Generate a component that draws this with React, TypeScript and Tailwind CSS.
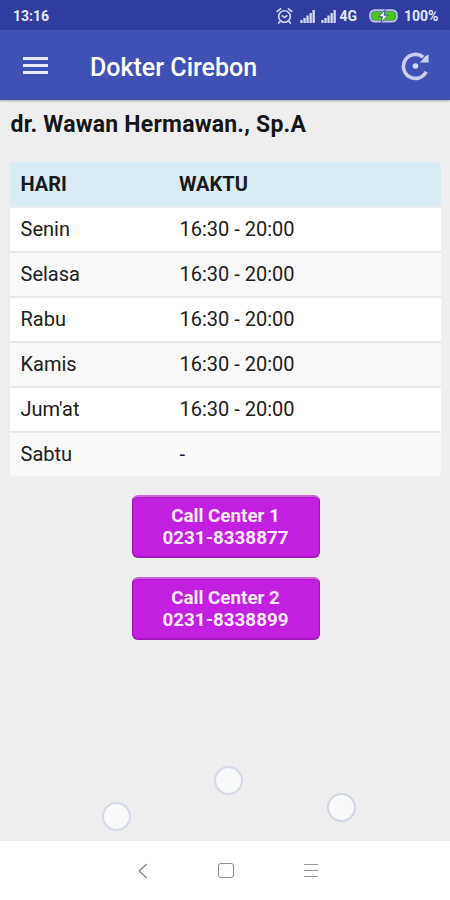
import React from "react";

interface ScheduleItem {
  hari: string;
  waktu: string;
}

interface CallButtonProps {
  label: string;
  phone: string;
}

const schedule: ScheduleItem[] = [
  { hari: "Senin", waktu: "16:30 - 20:00" },
  { hari: "Selasa", waktu: "16:30 - 20:00" },
  { hari: "Rabu", waktu: "16:30 - 20:00" },
  { hari: "Kamis", waktu: "16:30 - 20:00" },
  { hari: "Jum'at", waktu: "16:30 - 20:00" },
  { hari: "Sabtu", waktu: "-" },
];

const AlarmIcon: React.FC = () => (
  <svg width="17" height="18" viewBox="0 0 17 18" fill="none" stroke="#d3d8f6" strokeWidth="1.6">
    <circle cx="8.5" cy="9.5" r="5.8" />
    <path d="M1.2 4.4 4.6 1.8M15.8 4.4l-3.4-2.6M4 14.5l-1.3 1.6M13 14.5l1.3 1.6" strokeLinecap="round" />
    <path d="m5.8 8.3 2.7 2.2 2.9-2.2" />
  </svg>
);

const SignalIcon: React.FC = () => (
  <svg width="15" height="13" viewBox="0 0 15 13" fill="#d3d8f6">
    <rect x="0.3" y="10" width="2.3" height="3" />
    <rect x="3.4" y="8" width="2.3" height="5" />
    <rect x="6.4" y="5.5" width="2.3" height="7.5" />
    <rect x="9.5" y="3" width="2.3" height="10" />
    <rect x="12.5" y="0" width="2.3" height="13" />
  </svg>
);

const BatteryIcon: React.FC = () => (
  <svg width="29" height="14" viewBox="0 0 29 14">
    <rect x="1.2" y="1.2" width="26.6" height="11.4" rx="4.5" fill="#4b63a4" stroke="#b9c3e4" strokeWidth="2" />
    <rect x="3" y="2.8" width="23" height="8.4" rx="3" fill="#4cc51c" />
    <path d="M16.2 0.8 9.6 7.7h3.8l-1.2 5.7 7-7.2h-4.1z" fill="#fff" stroke="#3a57a0" strokeWidth="1" />
  </svg>
);

const ReloadIcon: React.FC = () => (
  <svg width="30" height="30" viewBox="0 0 30 30" fill="none">
    <path d="M26.2 20.8A12 12 0 1 1 23.2 6.2" stroke="#c9cff2" strokeWidth="3.6" />
    <path d="M28.6 3.6v8h-9l2.6-2.6 2.8-3.4z" fill="#c9cff2" />
    <circle cx="15.5" cy="15" r="2.8" fill="#d3d8f6" />
  </svg>
);

const CallButton: React.FC<CallButtonProps> = ({ label, phone }) => (
  <button className="h-[63px] w-[188px] rounded-md border border-t-2 border-[#a414be] border-t-[#cf62df] bg-[#c31fe0] text-center text-[18.8px] leading-[22.5px] font-bold text-[#fbeafd] shadow-[inset_0_1px_0_#a51abe,inset_0_-1px_0_#a51abe]">
    <span className="block">{label}</span>
    <span className="block">{phone}</span>
  </button>
);

const App: React.FC = () => {
  return (
    <div className="relative flex h-[900px] w-[450px] flex-col overflow-hidden bg-[#eeeeee] font-['Roboto',sans-serif]">
      <div className="flex h-[30px] shrink-0 items-center bg-[#303d9e] pt-0.5 pl-[13px] text-[#e4e8fb]">
        <span className="w-[263px] text-[14px] font-bold">13:16</span>
        <AlarmIcon />
        <div className="ml-[7px]">
          <SignalIcon />
        </div>
        <div className="ml-[6px]">
          <SignalIcon />
        </div>
        <span className="ml-[3.5px] w-[29.5px] text-[14px] font-bold">4G</span>
        <BatteryIcon />
        <span className="ml-[6px] text-[14px] font-bold">100%</span>
      </div>

      <header className="flex h-[70px] shrink-0 items-center bg-[#3f51b5] pr-[20px] pl-[23px] shadow-[0_1px_2px_rgba(0,0,0,0.3)]">
        <div className="flex w-[25px] flex-col gap-[4px]">
          <span className="h-[3px] bg-[#e6eafc]" />
          <span className="h-[3px] bg-[#e6eafc]" />
          <span className="h-[3px] bg-[#e6eafc]" />
        </div>
        <h1 className="ml-[42px] pt-[5px] text-[25px] leading-[30px] font-medium text-white">Dokter Cirebon</h1>
        <div className="ml-auto pt-0.5">
          <ReloadIcon />
        </div>
      </header>

      <main className="flex grow flex-col px-[10px]">
        <h2 className="mt-[10px] h-[30px] pl-[0.5px] text-[23px] leading-[30px] font-bold tracking-[0.2px] text-[#161616]">
          dr. Wawan Hermawan., Sp.A
        </h2>

        <table className="mt-[22px] w-[431px] table-fixed border-collapse overflow-hidden rounded text-[20px] text-[#202020]">
          <thead>
            <tr className="h-[45px] border-b-2 border-[#e9edef] bg-[#d9ebf5] text-left text-[#17191b]">
              <th className="w-[159px] pl-[10.5px] font-bold">HARI</th>
              <th className="pl-[10px] font-bold">WAKTU</th>
            </tr>
          </thead>
          <tbody>
            {schedule.map((item) => (
              <tr
                key={item.hari}
                className="h-[45px] border-b-2 border-[#e9e9e9] bg-white last:h-[44px] last:border-b-0 even:bg-[#f9f9f9]"
              >
                <td className="pb-[2px] pl-[10.5px]">{item.hari}</td>
                <td className="pb-[2px] pl-[10.5px]">{item.waktu}</td>
              </tr>
            ))}
          </tbody>
        </table>

        <div className="mt-[19px] flex flex-col items-center gap-[19px] pl-px">
          <CallButton label="Call Center 1" phone="0231-8338877" />
          <CallButton label="Call Center 2" phone="0231-8338899" />
        </div>
      </main>

      {/* floating bubbles */}
      <span className="absolute top-[766px] left-[214px] size-[29px] rounded-full border-2 border-[#d5d8e8] bg-[#f8f9f9]" />
      <span className="absolute top-[802px] left-[102px] size-[29px] rounded-full border-2 border-[#d5d8e8] bg-[#f8f9f9]" />
      <span className="absolute top-[793px] left-[327px] size-[29px] rounded-full border-2 border-[#d0d4e5] bg-[#f8f9f9]" />

      <nav className="flex h-[59px] shrink-0 items-center bg-white pl-[138px]">
        <svg width="10" height="16" viewBox="0 0 10 16" fill="none" stroke="#888" strokeWidth="1.4">
          <path d="M8.7 1 1.2 8l7.5 7" />
        </svg>
        <span className="ml-[70px] h-[15px] w-[16px] rounded-[3px] border-[1.5px] border-[#8c8c8c]" />
        <div className="ml-[70px] flex w-[14px] flex-col gap-[5px]">
          <span className="h-px bg-[#999]" />
          <span className="h-px bg-[#999]" />
          <span className="h-px bg-[#999]" />
        </div>
      </nav>
    </div>
  );
};

export default App;
